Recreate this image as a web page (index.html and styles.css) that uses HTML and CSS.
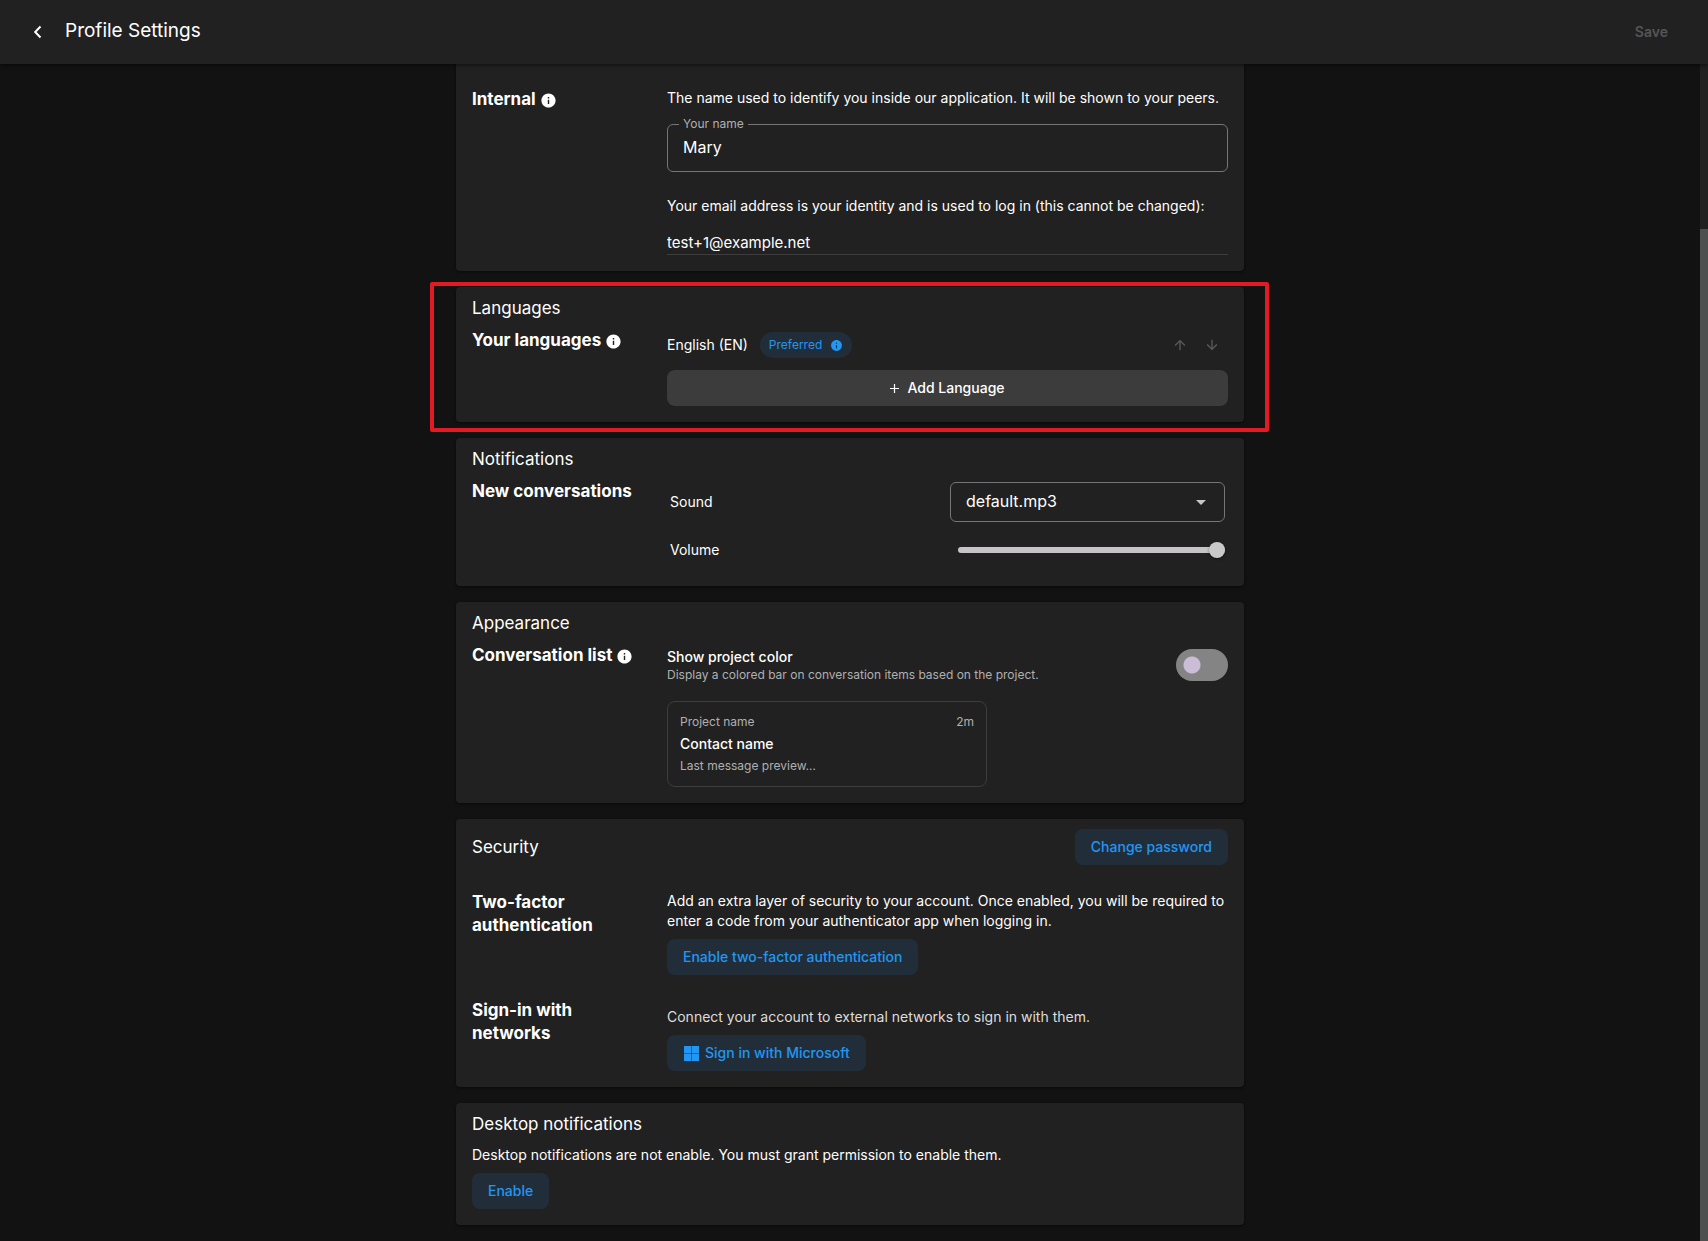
FILE: index.html
```html
<!DOCTYPE html>
<html lang="en">
<head>
<meta charset="utf-8">
<meta name="viewport" content="width=device-width, initial-scale=1">
<title>Profile Settings</title>
<link rel="stylesheet" href="styles.css">
</head>
<body>
<svg class="sprite" aria-hidden="true">
  <symbol id="info" viewBox="0 0 24 24"><path fill="currentColor" d="M12 2C6.48 2 2 6.48 2 12s4.480 10 10 10 10-4.480 10-10S17.520 2 12 2zm1 15h-2v-6h2zm0-8h-2V7h2z"/></symbol>
</svg>
<header class="topbar">
  <button class="back" type="button" aria-label="Back">
    <svg width="24" height="24" viewBox="0 0 24 24" fill="none" stroke="currentColor" stroke-width="2"><path d="M14.500 6.500 9.200 12l5.300 5.500"/></svg>
  </button>
  <h1 class="page-title">Profile Settings</h1>
  <button class="save" type="button" disabled>Save</button>
</header>
<div class="viewport">
  <main class="content">
    <section class="card card-first">
      <div class="row">
        <h3 class="label">Internal <svg class="info"><use href="#info"/></svg></h3>
        <div class="body">
          <p class="text">The name used to identify you inside our application. It will be shown to your peers.</p>
          <div class="field">
            <label class="field-label" for="name">Your name</label>
            <input class="field-input" id="name" type="text" value="Mary">
          </div>
          <label class="text email-label" for="email">Your email address is your identity and is used to log in (this cannot be changed):</label>
          <input class="email" id="email" type="text" value="test+1@example.net" readonly>
        </div>
      </div>
    </section>

    <section class="card highlighted">
      <h2 class="title">Languages</h2>
      <div class="row">
        <h3 class="label">Your languages <svg class="info"><use href="#info"/></svg></h3>
        <div class="body">
          <div class="language">
            <span class="text">English (EN)</span>
            <span class="chip">Preferred <svg class="chip-icon"><use href="#info"/></svg></span>
            <button class="move" type="button" aria-label="Move up" disabled>
              <svg width="16" height="16" viewBox="0 0 24 24" fill="currentColor"><path d="m4 12 1.410 1.410L11 7.830V20h2V7.830l5.580 5.590L20 12l-8-8z"/></svg>
            </button>
            <button class="move" type="button" aria-label="Move down" disabled>
              <svg width="16" height="16" viewBox="0 0 24 24" fill="currentColor"><path d="m20 12-1.410-1.410L13 16.170V4h-2v12.170l-5.580-5.590L4 12l8 8z"/></svg>
            </button>
          </div>
          <button class="button button-wide" type="button">
            <svg width="9" height="9" viewBox="0 0 9 9" stroke="currentColor" stroke-width="1.200"><path d="M4.500 0v9M0 4.500h9"/></svg>
            Add Language
          </button>
        </div>
      </div>
    </section>

    <section class="card">
      <h2 class="title">Notifications</h2>
      <div class="row">
        <h3 class="label">New conversations</h3>
        <div class="body sound">
          <div class="setting">
            <label class="text" for="sound">Sound</label>
            <div class="select-box">
              <select class="select" id="sound"><option>default.mp3</option></select>
              <svg class="caret" width="24" height="24" viewBox="0 0 24 24" fill="currentColor"><path d="m7 10 5 5 5-5z"/></svg>
            </div>
          </div>
          <div class="setting">
            <label class="text" for="volume">Volume</label>
            <input class="slider" id="volume" type="range" min="0" max="100" value="100">
          </div>
        </div>
      </div>
    </section>

    <section class="card">
      <h2 class="title">Appearance</h2>
      <div class="row">
        <h3 class="label">Conversation list <svg class="info"><use href="#info"/></svg></h3>
        <div class="body">
          <div class="toggle-row">
            <label for="color">
              <span class="text strong">Show project color</span>
              <span class="small">Display a colored bar on conversation items based on the project.</span>
            </label>
            <input class="toggle" id="color" type="checkbox" role="switch">
          </div>
          <div class="preview">
            <div class="preview-top small"><span>Project name</span><span>2m</span></div>
            <div class="text strong">Contact name</div>
            <div class="small">Last message preview…</div>
          </div>
        </div>
      </div>
    </section>

    <section class="card card-security">
      <div class="title-row">
        <h2 class="title">Security</h2>
        <button class="button button-blue" type="button">Change password</button>
      </div>
      <div class="row">
        <h3 class="label">Two-factor authentication</h3>
        <div class="body">
          <p class="text">Add an extra layer of security to your account. Once enabled, you will be required to enter a code from your authenticator app when logging in.</p>
          <button class="button button-blue" type="button">Enable two-factor authentication</button>
        </div>
      </div>
      <div class="row">
        <h3 class="label">Sign-in with networks</h3>
        <div class="body networks">
          <p class="text muted">Connect your account to external networks to sign in with them.</p>
          <button class="button button-blue" type="button">
            <svg width="16" height="16" viewBox="0 0 16 16" fill="currentColor"><path d="M1 1h7v7H1zM8.500 1H16v7H8.500zM1 8.500h7V16H1zM8.500 8.500H16V16H8.500z"/></svg>
            Sign in with Microsoft
          </button>
        </div>
      </div>
    </section>

    <section class="card">
      <h2 class="title">Desktop notifications</h2>
      <p class="text permission">Desktop notifications are not enable. You must grant permission to enable them.</p>
      <button class="button button-blue" type="button">Enable</button>
    </section>
  </main>
  <div class="scrollbar" aria-hidden="true"><div class="scroll-thumb"></div></div>
</div>
</body>
</html>
```
FILE: styles.css
```css
:root {
  --page: #121212;
  --surface: #212121;
  --blue: #2196f3;
  --blue-soft: #212e39;
  --grey: #b0b0b0;
}

* { box-sizing: border-box; }

body {
  margin: 0;
  min-height: 100vh;
  display: flex;
  flex-direction: column;
  background: var(--page);
  color: #fff;
  font-family: Inter, "Liberation Sans", sans-serif;
  font-size: 14px;
  line-height: 20px;
}

h1, h2, h3, p { margin: 0; }
button, input, select { font: inherit; color: inherit; }
button { border: 0; background: none; padding: 0; }
svg { flex: none; }
.sprite { position: absolute; width: 0; height: 0; }

.topbar {
  position: relative;
  z-index: 1;
  height: 64px;
  padding: 0 40px 0 26px;
  display: flex;
  align-items: center;
  background: var(--surface);
  box-shadow: 0 1px 4px rgba(0, 0, 0, 0.6);
}
.back { width: 24px; height: 24px; }
.back svg { display: block; }
.page-title {
  flex: 1;
  padding: 0 0 2px 15px;
  font-size: 19px;
  line-height: 28px;
  font-weight: 400;
}
.save { color: #555; font-weight: 600; }

.viewport { flex: 1; display: flex; }
.content {
  flex: 1;
  max-width: 788px;
  margin: 0 auto;
  padding-bottom: 16px;
  display: flex;
  flex-direction: column;
  gap: 16px;
}
.scrollbar {
  width: 8px;
  display: flex;
  flex-direction: column;
  justify-content: flex-end;
  background: #212121;
}
.scroll-thumb { height: 86%; background: #4f4f4f; }

.card {
  position: relative;
  padding: 8px 16px 16px;
  border-radius: 4px;
  background: var(--surface);
  box-shadow: 0 1px 3px rgba(0, 0, 0, 0.5);
}
.card-first { padding-top: 24px; border-radius: 0 0 4px 4px; }
.highlighted::after {
  content: "";
  position: absolute;
  inset: -5px -25px -10px -26px;
  border: 4px solid #e01b24;
  border-radius: 2px;
  pointer-events: none;
}

.title { font-size: 17px; line-height: 26px; font-weight: 400; }
.title-row { display: flex; justify-content: space-between; align-items: center; }
.row { display: grid; grid-template-columns: 195px 1fr; }
.label { padding-right: 24px; font-size: 17px; line-height: 23px; font-weight: 700; }
.info { width: 17px; height: 17px; vertical-align: -4px; }
.card > .title + .row { padding-top: 8px; }

.text { font-size: 14px; line-height: 20px; }
.strong { font-weight: 500; }
.muted { color: #ddd; }
.small { font-size: 12px; line-height: 16px; color: var(--grey); }

.field { position: relative; margin-top: 16px; }
.field-label {
  position: absolute;
  top: -8px;
  left: 12px;
  padding: 0 4px;
  background: var(--surface);
  color: var(--grey);
  font-size: 12px;
  line-height: 16px;
}
.field-input {
  display: block;
  width: 100%;
  height: 48px;
  padding: 0 15px 2px;
  border: 1px solid #757575;
  border-radius: 6px;
  background: transparent;
  font-size: 16px;
}
.email-label { display: block; margin-top: 24px; }
.email {
  display: block;
  width: 100%;
  height: 27px;
  margin-top: 12px;
  padding: 2px 0 0;
  border: 0;
  border-bottom: 1px solid #3d3d3d;
  background: transparent;
  font-size: 15px;
}

.language { display: flex; align-items: center; height: 26px; margin: 3px 0 12px; padding-right: 8px; }
.chip {
  display: flex;
  align-items: center;
  gap: 8px;
  height: 26px;
  margin: 0 auto 0 12px;
  padding: 0 9px;
  border-radius: 13px;
  background: var(--blue-soft);
  color: var(--blue);
  font-size: 12px;
}
.chip-icon { width: 13px; height: 13px; }
.move { width: 16px; height: 16px; margin-left: 16px; color: #5a5a5a; }
.move svg { display: block; }

.button {
  display: flex;
  align-items: center;
  justify-content: center;
  gap: 6px;
  height: 36px;
  padding: 0 16px;
  border-radius: 8px;
  font-weight: 500;
  font-size: 14px;
}
.button-wide { width: 100%; gap: 8px; background: #3c3c3c; }
.button-blue { background: var(--blue-soft); color: var(--blue); }

.sound { padding: 2px 3px 0; display: grid; gap: 8px; }
.setting { display: flex; align-items: center; justify-content: space-between; min-height: 40px; }
.select-box { position: relative; width: 275px; }
.select {
  display: block;
  width: 100%;
  height: 40px;
  padding: 0 32px 2px 15px;
  appearance: none;
  border: 1px solid #757575;
  border-radius: 6px;
  background: var(--surface);
  font-size: 16px;
}
.caret { position: absolute; right: 12px; top: 8px; color: #c6c6c6; pointer-events: none; }
.slider {
  appearance: none;
  width: 267px;
  height: 16px;
  margin: 0;
  background: transparent;
}
.slider::-webkit-slider-runnable-track {
  height: 6px;
  border-radius: 3px;
  background: #c6c4c6;
}
.slider::-webkit-slider-thumb {
  appearance: none;
  width: 16px;
  height: 16px;
  margin-top: -5px;
  border-radius: 50%;
  background: #c9c9c9;
  box-shadow: 0 1px 3px rgba(0, 0, 0, 0.4);
}

.toggle-row { display: flex; justify-content: space-between; align-items: center; padding-top: 3px; }
.toggle-row label { display: grid; }
.toggle {
  appearance: none;
  width: 52px;
  height: 32px;
  margin: 0;
  border-radius: 16px;
  background: radial-gradient(circle at 16px 16px, #cbbdd6 8px, #848484 9px);
}
.preview {
  width: 320px;
  margin-top: 18px;
  padding: 12px;
  border: 1px solid #3d3d3d;
  border-radius: 8px;
  display: grid;
  gap: 4px;
}
.preview-top { display: flex; justify-content: space-between; }

.card-security { padding-top: 10px; }
.title-row + .row { padding-top: 26px; }
.card-security .row + .row { padding-top: 24px; }
.card-security .text + .button { margin-top: 8px; }
.networks { padding-top: 8px; }
.permission { margin: 8px 0; }
```
